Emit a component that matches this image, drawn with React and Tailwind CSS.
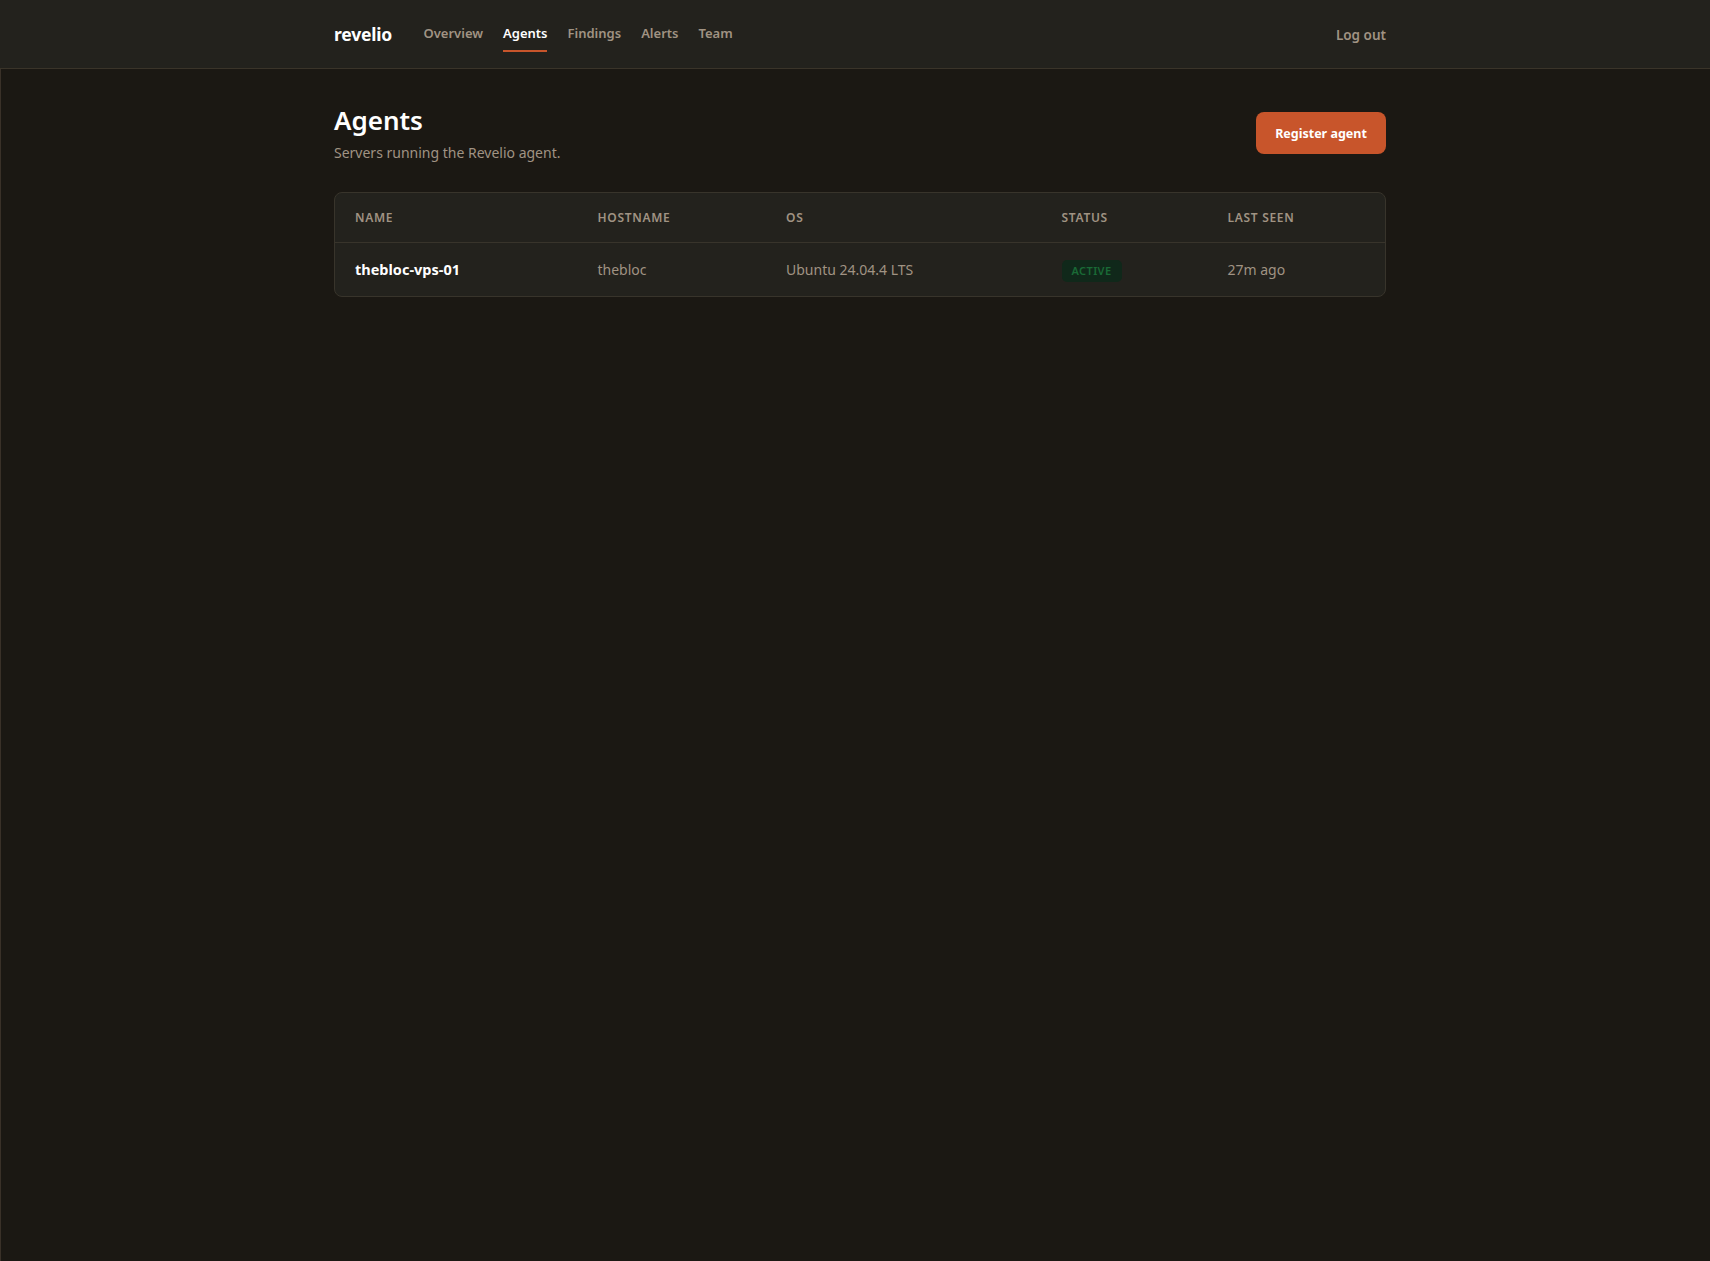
export default function App() {
  const nav = ["Overview", "Agents", "Findings", "Alerts", "Team"];
  const cols = "grid grid-cols-[242.5px_188.5px_275.5px_166px_1fr] px-5 items-center";
  return (
    <div className="min-h-screen bg-[#1b1813] text-[#f5f0e8] font-['Noto_Sans','Open_Sans',sans-serif] border-l border-[#3a3128] pl-[9px]">
      <header className="-ml-[10px] pl-[10px] h-[69px] bg-[#23221d] border-b border-[#3a3429]">
        <div className="max-w-[1052px] mx-auto flex h-full">
          <span className="text-[17.5px] leading-[68px] font-bold text-white mr-[31.5px] tracking-[-0.2px]">revelio</span>
          <nav className="flex gap-5 h-[52px] pt-[23px]">
            {nav.map((n) => (
              <a key={n} className={n === "Agents" ? "text-[13px] leading-5 font-semibold text-white border-b-2 border-[#c8552b]" : "text-[13px] leading-5 font-semibold text-[#a09383]"}>{n}</a>
            ))}
          </nav>
          <span className="ml-auto text-[13.5px] leading-[70px] font-semibold text-[#a09383]">Log out</span>
        </div>
      </header>
      <main className="max-w-[1052px] mx-auto pt-[34px]">
        <div className="flex items-start justify-between mb-[27px]">
          <div>
            <h1 className="text-[26px] leading-[34px] font-semibold text-white">Agents</h1>
            <p className="text-sm leading-6 mt-1 text-[#a09383]">Servers running the Revelio agent.</p>
          </div>
          <button className="h-[42px] w-[130px] mt-[9px] rounded-lg bg-[#c8552b] text-white text-[12.5px] leading-[44px] font-bold">Register agent</button>
        </div>
        <div className="rounded-lg border border-[#38342b] bg-[#23221d] overflow-hidden">
          <div className={cols + " h-[50px] text-xs font-semibold text-[#a09383] uppercase tracking-[0.7px] border-b border-[#38342b]"}>
            <span>Name</span><span>Hostname</span><span>OS</span><span>Status</span><span>Last seen</span>
          </div>
          <div className={cols + " h-[53px] text-sm text-[#a09383]"}>
            <span className="text-[14.5px] font-bold text-white">thebloc-vps-01</span>
            <span>thebloc</span>
            <span>Ubuntu 24.04.4 LTS</span>
            <span className="flex pt-0.5"><span className="flex items-center justify-center w-[60px] h-[22px] rounded-[5px] bg-[#10281a] text-[#1a6a36] text-[11px] font-semibold uppercase tracking-[0.4px]">Active</span></span>
            <span>27m ago</span>
          </div>
        </div>
      </main>
    </div>
  );
}
